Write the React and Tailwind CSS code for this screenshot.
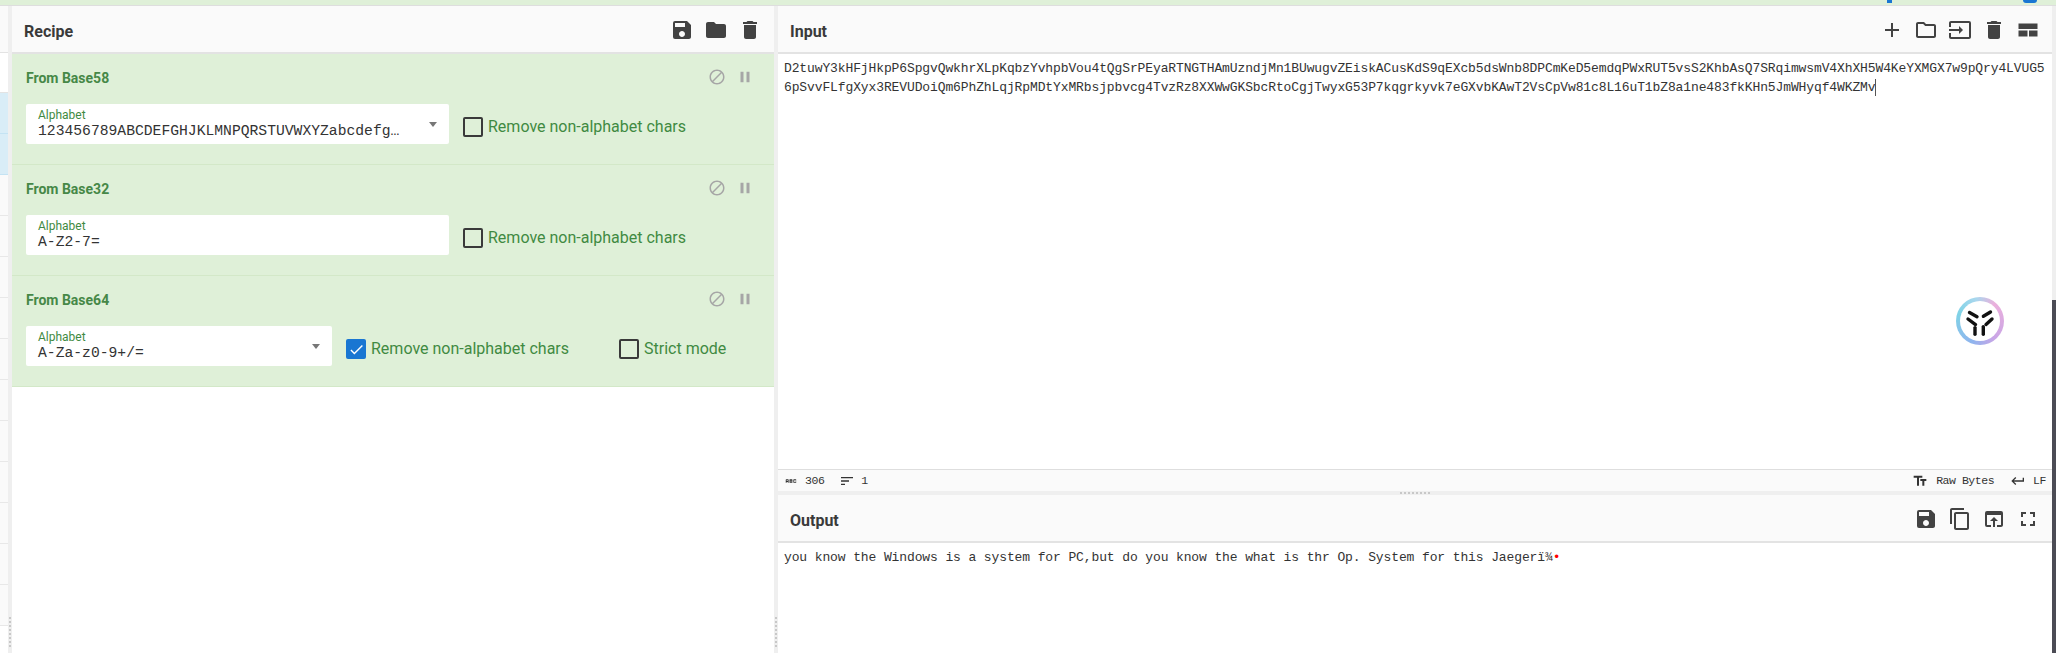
import {
  MdAbc,
  MdAdd,
  MdBlock,
  MdCheck,
  MdContentCopy,
  MdDelete,
  MdFolder,
  MdFullscreen,
  MdInput,
  MdKeyboardReturn,
  MdOpenInBrowser,
  MdOutlineFolder,
  MdPause,
  MdSave,
  MdSort,
  MdTextFields,
} from "react-icons/md";

const mono = "[font-family:'Liberation_Mono',monospace]";

function Checkbox({ checked, label }) {
  return (
    <div className="flex items-start mt-[13px]">
      {checked ? (
        <div className="w-5 h-5 rounded-[2px] bg-[#1976d2] flex items-center justify-center text-white">
          <MdCheck size={17} />
        </div>
      ) : (
        <div className="w-5 h-5 rounded-[2px] border-2 border-[#3a3a3a]" />
      )}
      <span className="ml-[5px] text-[16px] leading-5 text-[#3f8a42]">{label}</span>
    </div>
  );
}

function Operation({ title, width, value, dropdown, children }) {
  return (
    <div className="h-[111px] bg-[#dff0d8] border-b border-[#d3e8c8] pl-[14px]">
      <div className="h-[48px] mb-[2px] flex items-center justify-between pr-5">
        <span className="text-[14px] font-bold text-[#468847]">{title}</span>
        <div className="flex items-center gap-[10px] text-[#a6a6a6] -mt-[2px]">
          <MdBlock size={18} />
          <MdPause size={18} />
        </div>
      </div>
      <div className="flex">
        <div className={`${width} h-10 bg-white rounded-[2px] pl-3 relative shrink-0`}>
          <div className="text-[12px] leading-[14px] pt-[4px] box-content text-[#3f8a42]">
            Alphabet
          </div>
          <div className={`${mono} text-[14.7px] leading-[18px] text-[#333] whitespace-nowrap`}>
            {value}
          </div>
          {dropdown && (
            <div className={`absolute top-[18px] ${dropdown} w-0 h-0 border-x-[4px] border-x-transparent border-t-[5px] border-t-[#777]`} />
          )}
        </div>
        {children}
      </div>
    </div>
  );
}

function VerticalGutter() {
  return (
    <div className="w-1 shrink-0 bg-[#efefef] flex flex-col justify-end items-center gap-[2px] pb-[6px]">
      {[0, 1, 2, 3, 4, 5, 6, 7].map((i) => (
        <div key={i} className="w-[2px] h-[2px] bg-[#c8c8c8]" />
      ))}
    </div>
  );
}

function PanelHeader({ title, children }) {
  return (
    <div className="h-[48px] shrink-0 bg-[#fafafa] border-b-2 border-[#e3e3e3] flex items-center justify-between pl-3 pr-3 text-[#424242]">
      <span className="text-[16px] font-bold text-[#3a3a3a] mt-[6px]">{title}</span>
      <div className="flex items-center gap-[10px] mt-[2px]">{children}</div>
    </div>
  );
}

function Sidebar() {
  return (
    <div className="w-2 shrink-0 flex flex-col">
      <div className="h-[47px] bg-[#fafafa] border-b border-[#e3e3e3]" />
      <div className="h-[40px] bg-white border-b border-[#e3e3e3]" />
      <div className="h-[41px] bg-[#d9edf7] border-b border-[#c4e3f3]" />
      <div className="h-[41px] bg-[#d9edf7] border-b border-[#c4e3f3]" />
      {[0, 1, 2, 3, 4, 5, 6, 7, 8, 9, 10].map((i) => (
        <div key={i} className="h-[41px] shrink-0 bg-[#fafafa] border-b border-[#e8e8e8]" />
      ))}
    </div>
  );
}

function LayoutIcon() {
  return (
    <svg width="24" height="24" viewBox="0 0 24 24" fill="currentColor">
      <path d="M2.5 5.5h19v5.5h-19zM2.5 12.5h9v6h-9zM13 12.5h8.5v6H13z" />
    </svg>
  );
}

function Logo() {
  return (
    <div className="absolute left-[1178px] top-[291px] w-12 h-12 rounded-full bg-[conic-gradient(from_200deg,#8fb4ee,#7fd3e6_90deg,#a9d7ee_150deg,#ebb0dc_200deg,#c9a5e6_300deg,#8fb4ee)] p-[4px]">
      <div className="w-full h-full rounded-full bg-white flex items-center justify-center">
        <svg width="38" height="38" viewBox="-19 -19 38 38" fill="none" stroke="#111" strokeWidth="3.4" strokeLinecap="round">
          <path d="M-10.5 -8.5L-3 -4.3" />
          <path d="M10.5 -9L3.4 -4.7" />
          <path d="M-12 -2L-4.5 3.6" />
          <path d="M12 -2L6 3.4" />
          <path d="M-5 6.6V13.2" />
          <path d="M3.3 5.6V13.2" />
        </svg>
      </div>
    </div>
  );
}

export default function App() {
  return (
    <div className="w-[2056px] h-[653px] overflow-hidden flex flex-col bg-white relative [font-family:Roboto,sans-serif]">
      <div className="h-[6px] shrink-0 bg-[#dff0d8] border-b border-[#dedede] relative">
        <div className="absolute left-[1887px] top-0 w-[5px] h-[3px] bg-[#1976d2]" />
        <div className="absolute left-[2023px] top-0 w-[14px] h-[3px] rounded-b-full bg-[#1976d2]" />
      </div>

      <div className="flex flex-1 min-h-0">
        <Sidebar />
        <VerticalGutter />

        <div className="w-[762px] shrink-0 flex flex-col bg-white">
          <PanelHeader title="Recipe">
            <MdSave size={24} />
            <MdFolder size={24} />
            <MdDelete size={24} />
          </PanelHeader>
          <Operation
            title="From Base58"
            width="w-[423px]"
            value="123456789ABCDEFGHJKLMNPQRSTUVWXYZabcdefg…"
            dropdown="left-[403px]"
          >
            <div className="ml-[14px]">
              <Checkbox label="Remove non-alphabet chars" />
            </div>
          </Operation>
          <Operation title="From Base32" width="w-[423px]" value="A-Z2-7=">
            <div className="ml-[14px]">
              <Checkbox label="Remove non-alphabet chars" />
            </div>
          </Operation>
          <Operation
            title="From Base64"
            width="w-[306px]"
            value="A-Za-z0-9+/="
            dropdown="left-[286px]"
          >
            <div className="ml-[14px] flex gap-[50px]">
              <Checkbox checked label="Remove non-alphabet chars" />
              <Checkbox label="Strict mode" />
            </div>
          </Operation>
        </div>

        <VerticalGutter />

        <div className="w-[1274px] shrink-0 flex flex-col relative">
          <PanelHeader title="Input">
            <MdAdd size={24} />
            <MdOutlineFolder size={24} />
            <MdInput size={24} />
            <MdDelete size={24} />
            <LayoutIcon />
          </PanelHeader>

          <div className={`h-[415px] shrink-0 pl-[6px] pt-[5px] ${mono} text-[13px] leading-[19px] tracking-[-0.115px] text-[#333]`}>
            <div>D2tuwY3kHFjHkpP6SpgvQwkhrXLpKqbzYvhpbVou4tQgSrPEyaRTNGTHAmUzndjMn1BUwugvZEiskACusKdS9qEXcb5dsWnb8DPCmKeD5emdqPWxRUT5vsS2KhbAsQ7SRqimwsmV4XhXH5W4KeYXMGX7w9pQry4LVUG5</div>
            <div className="flex items-center">
              <span>6pSvvFLfgXyx3REVUDoiQm6PhZhLqjRpMDtYxMRbsjpbvcg4TvzRz8XXWwGKSbcRtoCgjTwyxG53P7kqgrkyvk7eGXvbKAwT2VsCpVw81c8L16uT1bZ8a1ne483fkKHn5JmWHyqf4WKZMv</span>
              <span className="w-px h-[17px] bg-[#555]" />
            </div>
          </div>

          <div className={`h-[22px] shrink-0 bg-[#fafafa] border-t border-[#dedede] flex items-center justify-between pl-[6px] pr-[6px] ${mono} text-[11.5px] tracking-[-0.46px] text-[#333]`}>
            <div className="flex items-center">
              <MdAbc size={14} />
              <span className="ml-[7px]">306</span>
              <MdSort size={16} className="ml-[15px]" />
              <span className="ml-[6px]">1</span>
            </div>
            <div className="flex items-center">
              <MdTextFields size={16} />
              <span className="ml-[8px]">Raw Bytes</span>
              <MdKeyboardReturn size={16} className="ml-[16px]" />
              <span className="ml-[7px]">LF</span>
            </div>
          </div>

          <div className="h-1 shrink-0 bg-[#efefef] flex justify-center items-center gap-[2px]">
            {[0, 1, 2, 3, 4, 5, 6, 7].map((i) => (
              <div key={i} className="w-[2px] h-[2px] bg-[#c8c8c8]" />
            ))}
          </div>

          <PanelHeader title="Output">
            <MdSave size={24} />
            <MdContentCopy size={24} />
            <MdOpenInBrowser size={24} />
            <MdFullscreen size={24} />
          </PanelHeader>

          <div className={`flex-1 pl-[6px] pt-[5px] ${mono} text-[13px] leading-[19px] tracking-[-0.115px] text-[#333]`}>
            you know the Windows is a system for PC,but do you know the what is thr Op. System for this Jaegerï¾
            <span className="text-[#f00]">•</span>
          </div>

          <Logo />
        </div>

        <div className="w-1 shrink-0 flex flex-col">
          <div className="h-[294px] bg-[#efefef]" />
          <div className="flex-1 bg-[#4c4c55]" />
        </div>
      </div>
    </div>
  );
}
